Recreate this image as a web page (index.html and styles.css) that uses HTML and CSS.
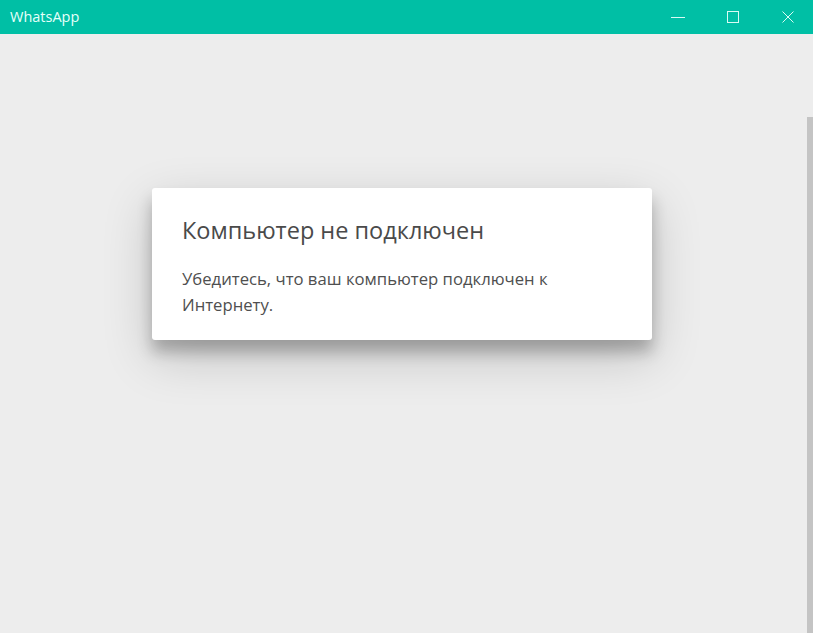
FILE: index.html
```html
<!DOCTYPE html>
<html lang="ru">
<head>
<meta charset="utf-8">
<title>WhatsApp</title>
<link rel="stylesheet" href="styles.css">
</head>
<body>
<div class="window">
  <header class="titlebar">
    <span class="app-title">WhatsApp</span>
    <div class="controls">
      <div class="ctrl ctrl-min">
        <svg width="16" height="16" viewBox="0 0 16 16"><line x1="1" y1="8.5" x2="15" y2="8.5" stroke="#d8fbf4" stroke-width="1"/></svg>
      </div>
      <div class="ctrl ctrl-max">
        <svg width="16" height="16" viewBox="0 0 16 16"><rect x="2.5" y="2.5" width="11" height="11" fill="none" stroke="#d8fbf4" stroke-width="1"/></svg>
      </div>
      <div class="ctrl ctrl-close">
        <svg width="16" height="16" viewBox="0 0 16 16"><path d="M2.5 2.5 L13.5 13.5 M13.5 2.5 L2.5 13.5" stroke="#d8fbf4" stroke-width="1"/></svg>
      </div>
    </div>
  </header>
  <main class="content">
    <div class="scrollbar"></div>
    <div class="dialog">
      <h1 class="dialog-title">Компьютер не подключен</h1>
      <p class="dialog-text">Убедитесь, что ваш компьютер подключен к Интернету.</p>
    </div>
  </main>
</div>
</body>
</html>
```

FILE: styles.css
```css
html, body {
  margin: 0;
  padding: 0;
  height: 100%;
}
body {
  background: #ededed;
  font-family: "Open Sans", "Noto Sans", sans-serif;
  overflow: hidden;
}
.window {
  display: flex;
  flex-direction: column;
  height: 633px;
  width: 813px;
}
.titlebar {
  height: 34px;
  background: #00bfa5;
  display: flex;
  align-items: center;
  justify-content: space-between;
  flex-shrink: 0;
}
.app-title {
  color: #e6fffa;
  font-size: 14.5px;
  font-weight: 500;
  padding-left: 10px;
  padding-bottom: 1px;
}
.controls {
  display: flex;
  height: 34px;
}
.ctrl {
  height: 34px;
  display: flex;
  align-items: center;
  justify-content: center;
}
.ctrl-min { width: 50px; }
.ctrl-max { width: 60px; }
.ctrl-close { width: 50px; }
.content {
  position: relative;
  flex: 1;
  display: flex;
  justify-content: center;
  padding-top: 154px;
  box-sizing: border-box;
  align-items: flex-start;
}
.scrollbar {
  position: absolute;
  right: 0;
  top: 83px;
  bottom: 0;
  width: 6px;
  background: #c4c4c4;
}
.dialog {
  width: 500px;
  height: 152px;
  box-sizing: border-box;
  background: #ffffff;
  border-radius: 3px;
  padding: 26px 30px 0 30px;
  box-shadow: 0 17px 50px 0 rgba(0,0,0,0.19), 0 12px 15px 0 rgba(0,0,0,0.24);
  margin-right: 9px;
}
.dialog-title {
  margin: 0;
  font-weight: 400;
  font-size: 23.5px;
  line-height: 32px;
  color: #4a4a4a;
}
.dialog-text {
  margin: 20px 0 0 0;
  font-size: 16.7px;
  line-height: 26px;
  color: #4f4f4f;
  width: 420px;
}
```
